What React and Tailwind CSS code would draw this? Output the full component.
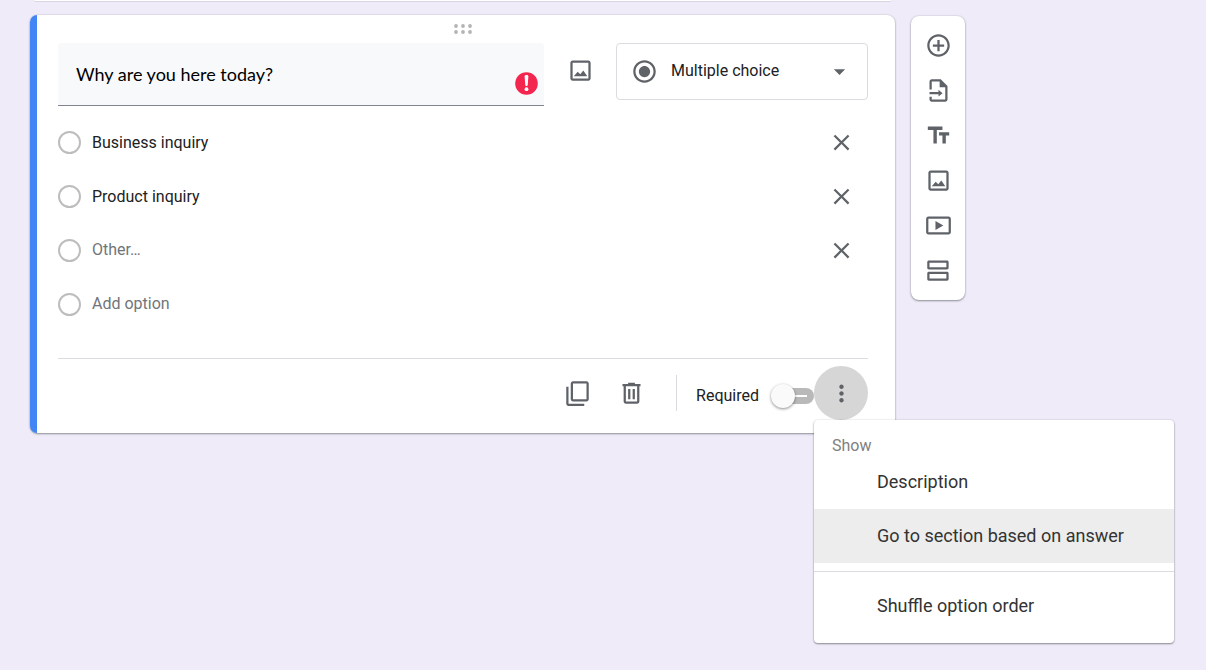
import React, { useState } from "react";

const ICONS = {
    add: "M13 7h-2v4H7v2h4v4h2v-4h4v-2h-4V7zm-1-5C6.49 2 2 6.49 2 12s4.49 10 10 10 10-4.49 10-10S17.51 2 12 2zm0 18c-4.41 0-8-3.59-8-8s3.59-8 8-8 8 3.59 8 8-3.59 8-8 8z",
    importFile:
        "M14 2H6c-1.1 0-2 .9-2 2v7h2V4h7v5h5v11H6v-2.400H4V20c0 1.100.9 2 2 2h12c1.100 0 2-.9 2-2V8l-6-6zM12 11.400v2H4v2h8v2l3.600-3z",
    title: "M2.500 4v3h5v12h3V7h5V4h-13zm19 5h-9v3h3v7h3v-7h3V9z",
    image: "M19 3H5c-1.100 0-2 .9-2 2v14c0 1.100.9 2 2 2h14c1.100 0 2-.9 2-2V5c0-1.100-.9-2-2-2zm0 16H5V5h14v14zM6 17h12l-3.500-5-2.700 3.400L9.500 13z",
    video: "M21 4H3c-1.100 0-2 .9-2 2v12c0 1.100.9 2 2 2h18c1.100 0 2-.9 2-2V6c0-1.100-.9-2-2-2zm0 14H3V6h18v12zM9.300 8v8l7-4z",
    section:
        "M19.500 3H3.500c-.9 0-1.500.6-1.500 1.500v5c0 .9.6 1.500 1.500 1.500h16c.9 0 1.500-.6 1.500-1.500v-5c0-.9-.6-1.500-1.500-1.500zM19 9H4V5h15v4zM19.500 13H3.500c-.9 0-1.500.6-1.500 1.500v5c0 .9.6 1.500 1.500 1.500h16c.9 0 1.500-.6 1.500-1.500v-5c0-.9-.6-1.500-1.500-1.500zM19 19H4v-4h15v4z",
    close: "M19 6.410L17.590 5 12 10.590 6.410 5 5 6.410 10.590 12 5 17.590 6.410 19 12 13.410 17.590 19 19 17.590 13.410 12z",
    copy: "M20 1H8C6.900 1 6 1.900 6 3v14c0 1.100.9 2 2 2h12c1.100 0 2-.9 2-2V3c0-1.100-.9-2-2-2zm0 16H8V3h12v14zM4 6H2v15c0 1.100.9 2 2 2h14v-2H4V6z",
    trash: "M15 3.500V2.500H9v1H4v2h1v13.500c0 1.100.9 2 2 2h10c1.100 0 2-.9 2-2V5.500h1v-2h-5zm2 15.500H7V5.500h10V19zM9 8h2v9H9zm4 0h2v9h-2z",
    more: "M12 8c1.100 0 2-.9 2-2s-.9-2-2-2-2 .9-2 2 .9 2 2 2zm0 2c-1.100 0-2 .9-2 2s.9 2 2 2 2-.9 2-2-.9-2-2-2zm0 6c-1.100 0-2 .9-2 2s.9 2 2 2 2-.9 2-2-.9-2-2-2z",
    radio: "M12 7c-2.760 0-5 2.240-5 5s2.240 5 5 5 5-2.240 5-5-2.240-5-5-5zm0-5C6.480 2 2 6.480 2 12s4.480 10 10 10 10-4.480 10-10S17.520 2 12 2zm0 18c-4.420 0-8-3.580-8-8s3.580-8 8-8 8 3.580 8 8-3.580 8-8 8z",
    arrow: "M7 10l5 5 5-5z",
};

function Icon({ name, className = "" }) {
    return (
        <svg
            viewBox="0 0 24 24"
            fill="currentColor"
            aria-hidden="true"
            className={`size-[27px] shrink-0 ${className}`}
        >
            <path d={ICONS[name]} />
        </svg>
    );
}

function IconButton({ name, label }) {
    return (
        <button
            type="button"
            aria-label={label}
            className="flex size-[54px] shrink-0 items-center justify-center rounded-full text-[#5f6368]"
        >
            <Icon name={name} />
        </button>
    );
}

const tools = [
    { name: "add", label: "Add question" },
    { name: "importFile", label: "Import questions" },
    { name: "title", label: "Add title and description" },
    { name: "image", label: "Add image" },
    { name: "video", label: "Add video" },
    { name: "section", label: "Add section" },
];

function Toolbar() {
    return (
        <div className="mt-px flex w-[54px] shrink-0 flex-col rounded-lg bg-white py-[7px] shadow-[0_1px_2px_rgba(60,64,67,0.5),0_0_2px_rgba(60,64,67,0.2)]">
            {tools.map((tool) => (
                <button
                    key={tool.name}
                    type="button"
                    aria-label={tool.label}
                    className="flex h-[45px] items-center justify-center text-[#5f6368]"
                >
                    <Icon name={tool.name} />
                </button>
            ))}
        </div>
    );
}

function OptionRow({ option, onChange, onRemove }) {
    return (
        <li className="flex h-[54px] items-center">
            <span className="size-[23px] shrink-0 rounded-full border-2 border-[#bdbdbd]"></span>
            {option.editable ? (
                <input
                    type="text"
                    aria-label="Option value"
                    value={option.text}
                    onChange={(e) => onChange(e.target.value)}
                    className="ml-[11px] min-w-0 flex-1 pt-0.5 text-base text-[#202124] outline-none"
                />
            ) : (
                <span className="ml-[11px] min-w-0 flex-1 text-base text-[#70757a]">
                    {option.text}
                </span>
            )}
            <button
                type="button"
                aria-label="Remove option"
                onClick={onRemove}
                className="flex size-[54px] shrink-0 items-center justify-center text-[#5f6368]"
            >
                <Icon name="close" />
            </button>
        </li>
    );
}

function MoreMenu() {
    return (
        <div
            role="menu"
            className="absolute top-full left-0 z-10 w-[360px] rounded bg-white pt-4 pb-[10px] text-lg text-[#333333] shadow-[0_1px_2px_rgba(0,0,0,0.4),0_0_2px_rgba(0,0,0,0.15)]"
        >
            <div className="px-[18px] text-base leading-[19px] text-[#808080]">
                Show
            </div>
            <button
                type="button"
                role="menuitem"
                className="block h-[54px] w-full pr-4 pl-[63px] text-left"
            >
                Description
            </button>
            <button
                type="button"
                role="menuitem"
                className="block h-[54px] w-full bg-[#ededed] pr-4 pl-[63px] text-left"
            >
                Go to section based on answer
            </button>
            <hr className="mt-2 mb-[7px] border-[#dadce0]" />
            <button
                type="button"
                role="menuitem"
                className="block h-[54px] w-full pr-4 pl-[63px] text-left"
            >
                Shuffle option order
            </button>
        </div>
    );
}

export default function App() {
    const [question, setQuestion] = useState("Why are you here today?");
    const [type, setType] = useState("Multiple choice");
    const [required, setRequired] = useState(false);
    const [menuOpen, setMenuOpen] = useState(true);
    const [options, setOptions] = useState([
        { id: 1, text: "Business inquiry", editable: true },
        { id: 2, text: "Product inquiry", editable: true },
        { id: 3, text: "Other…", editable: false },
    ]);

    const changeOption = (id, text) => {
        setOptions(options.map((o) => (o.id === id ? { ...o, text } : o)));
    };

    const removeOption = (id) => {
        setOptions(options.filter((o) => o.id !== id));
    };

    const addOption = () => {
        setOptions([
            ...options,
            {
                id: Date.now(),
                text: `Option ${options.length + 1}`,
                editable: true,
            },
        ]);
    };

    return (
        <div className="min-h-screen bg-[#efebf8] px-[30px] font-[Roboto,sans-serif] text-[#202124]">
            {/* bottom edge of the card above */}
            <div className="mx-1 h-0.5 max-w-[858px] rounded-b-lg border-b border-[#d9d6e2] bg-white"></div>

            <div className="mt-[13px] flex items-start gap-4">
                <div className="flex max-w-[865px] min-w-0 flex-1 rounded-lg bg-white shadow-[0_1px_2px_rgba(60,64,67,0.5),0_0_2px_rgba(60,64,67,0.2)]">
                    <div className="w-[7px] shrink-0 rounded-l-lg bg-[#4285f4]"></div>
                    <div className="min-w-0 flex-1 pr-[27px] pb-[13px] pl-[21px]">
                        <div className="flex h-7 items-center justify-center text-[#b4b4b4]">
                            <svg
                                viewBox="0 0 18 10"
                                fill="currentColor"
                                aria-hidden="true"
                                className="h-[10px] w-[18px]"
                            >
                                <circle cx="2" cy="2" r="1.900" />
                                <circle cx="9" cy="2" r="1.900" />
                                <circle cx="16" cy="2" r="1.900" />
                                <circle cx="2" cy="8" r="1.900" />
                                <circle cx="9" cy="8" r="1.900" />
                                <circle cx="16" cy="8" r="1.900" />
                            </svg>
                        </div>

                        <div className="flex items-start">
                            <div className="flex h-[63px] min-w-0 flex-1 items-end rounded-t border-b border-[#80868b] bg-[#f8f9fa] pr-1.5">
                                <input
                                    type="text"
                                    aria-label="Question"
                                    value={question}
                                    onChange={(e) =>
                                        setQuestion(e.target.value)
                                    }
                                    className="h-full min-w-0 flex-1 pl-[18px] font-[Lato,sans-serif] text-lg text-black outline-none"
                                />
                                <svg
                                    viewBox="0 0 23 23"
                                    role="img"
                                    aria-label="Error"
                                    className="mb-[10px] size-[23px] shrink-0"
                                >
                                    <circle
                                        cx="11.500"
                                        cy="11.500"
                                        r="11.300"
                                        fill="#f2264f"
                                    />
                                    <path
                                        d="M9.600 4.200c0-1.600 3.800-1.600 3.800 0l-.7 8.800c-.1 1.300-2.300 1.300-2.400 0z"
                                        fill="#fff"
                                    />
                                    <circle
                                        cx="11.500"
                                        cy="17.200"
                                        r="1.900"
                                        fill="#fff"
                                    />
                                </svg>
                            </div>
                            <div className="flex w-[72px] shrink-0 justify-center">
                                <IconButton name="image" label="Add image" />
                            </div>
                            <div className="relative flex w-[252px] shrink-0 items-center text-[#5f6368]">
                                <select
                                    aria-label="Question type"
                                    value={type}
                                    onChange={(e) => setType(e.target.value)}
                                    className="h-[57px] w-full appearance-none rounded border border-[#dadce0] bg-white pb-0.5 pl-[54px] text-base text-[#202124]"
                                >
                                    <option>Multiple choice</option>
                                </select>
                                <Icon
                                    name="radio"
                                    className="pointer-events-none absolute left-[15px]"
                                />
                                <Icon
                                    name="arrow"
                                    className="pointer-events-none absolute right-[15px]"
                                />
                            </div>
                        </div>

                        <ul className="mt-[9px]">
                            {options.map((option) => (
                                <OptionRow
                                    key={option.id}
                                    option={option}
                                    onChange={(text) =>
                                        changeOption(option.id, text)
                                    }
                                    onRemove={() => removeOption(option.id)}
                                />
                            ))}
                            <li className="flex h-[54px] items-center gap-[11px]">
                                <span className="size-[23px] shrink-0 rounded-full border-2 border-[#bdbdbd]"></span>
                                <button
                                    type="button"
                                    onClick={addOption}
                                    className="text-base text-[#70757a]"
                                >
                                    Add option
                                </button>
                            </li>
                        </ul>

                        <div className="mt-[27px] flex items-center justify-end border-t border-[#dadce0] pt-[7px]">
                            <IconButton name="copy" label="Duplicate" />
                            <IconButton name="trash" label="Delete" />
                            <div className="ml-[18px] h-9 border-l border-[#dadce0]"></div>
                            <label className="ml-[19px] flex items-center gap-3 pt-1.5 text-base">
                                Required
                                <span className="relative flex h-6 w-[43px] items-center justify-end">
                                    <input
                                        type="checkbox"
                                        role="switch"
                                        checked={required}
                                        onChange={(e) =>
                                            setRequired(e.target.checked)
                                        }
                                        className="peer absolute inset-0 appearance-none"
                                    />
                                    <span className="flex h-4 w-10 items-center justify-end rounded-full bg-[#b9b9b9] pr-[7px]">
                                        <span className="h-0.5 w-3 bg-white"></span>
                                    </span>
                                    <span className="absolute top-0 left-0 size-6 rounded-full bg-[#fafafa] shadow-[0_1px_3px_rgba(0,0,0,0.45)] peer-checked:right-0 peer-checked:left-auto"></span>
                                </span>
                            </label>
                            <div className="relative">
                                <button
                                    type="button"
                                    aria-label="More options"
                                    aria-expanded={menuOpen}
                                    onClick={() => setMenuOpen(!menuOpen)}
                                    className="flex size-[54px] items-center justify-center rounded-full bg-[#d6d6d6] text-[#5f6368]"
                                >
                                    <Icon name="more" />
                                </button>
                                {menuOpen && <MoreMenu />}
                            </div>
                        </div>
                    </div>
                </div>

                <Toolbar />
            </div>
        </div>
    );
}
